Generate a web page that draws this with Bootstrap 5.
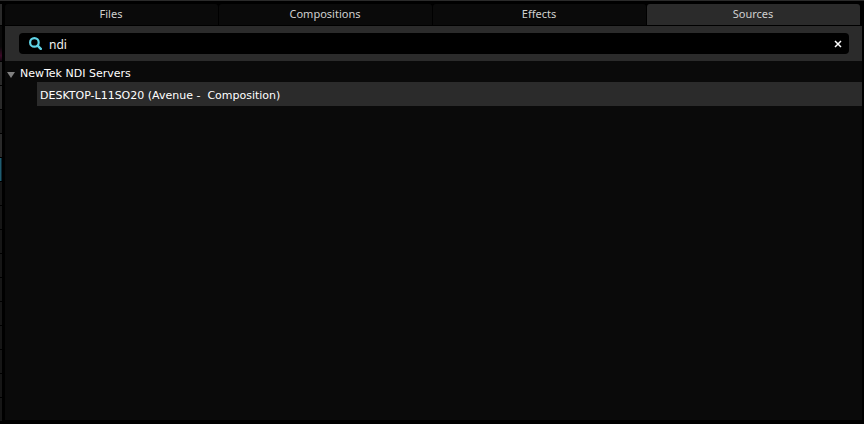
<!DOCTYPE html>
<html lang="en">
<head>
<meta charset="utf-8">
<meta name="viewport" content="width=device-width, initial-scale=1">
<title>Sources</title>
<link href="https://cdn.jsdelivr.net/npm/bootstrap@5.3.0/dist/css/bootstrap.min.css" rel="stylesheet">
<style>
body { background: #000; color: #fff; font: 11px/16px Verdana, "DejaVu Sans", sans-serif; }
.top-edge { height: 1px; background: #2b2b2b; margin-bottom: 3px; }
/* Sliver of the neighbouring panel */
.side-strip { width: 2px; margin-right: 3px; }
.side-strip span { flex: 0 0 23px; margin-bottom: 1px; background: #161616; }
.side-strip .cell-head { flex-basis: 21px; background: #2a2a2a; }
.side-strip .cell-clip { flex-basis: 35px; background: linear-gradient(#0a0a0a 60%, #3c0a28 85%, #120810); }
.side-strip .cell-light { background: #2a2a2a; }
.side-strip .cell-mid { background: #1d1d1d; }
.side-strip .cell-active { background: #0d2c38; border-left: 1px solid #1f5c70; }
.browser { margin-right: 2px; margin-bottom: 4px; }
.browser-tabs { gap: 1px; padding-right: 2px; margin-bottom: 1px; }
.browser-tabs .nav-link { height: 21px; padding: 2px 1px 3px 0; line-height: 16px; font-family: "Noto Sans", sans-serif; font-size: 11px; color: #d0d0d0; background: #0a0a0a; border-radius: 3px 3px 0 0; }
.browser-tabs .nav-link.active { background: #2b2b2b; color: #d0d0d0; }
.search-bar { background: #2b2b2b; padding: 7px 13px 7px 14px; }
.search-box { height: 21px; background: #000; border-radius: 4px; padding: 0 6px 0 10px; }
.search-box input { min-width: 0; color: #f0f0f0; font-family: "Noto Sans", sans-serif; font-size: 12px; line-height: 21px; height: 21px; outline: 0; margin-left: 7px; padding: 2px 0 0; }
.clear-btn { width: 10px; height: 21px; color: #fff; }
.source-list { background: #0a0a0a; }
.group-toggle { height: 21px; padding: 5px 0 0 2px; gap: 5px; color: #fff; line-height: 16px; }
.group-toggle svg { margin-top: 2px; }
.source-item { margin-left: 32px; height: 24px; padding: 6px 3px 2px; line-height: 16px; background: #2b2b2b; color: #fff; white-space: pre; }
</style>
<script defer src="https://cdn.jsdelivr.net/npm/bootstrap@5.3.0/dist/js/bootstrap.bundle.min.js"></script>
</head>
<body class="d-flex flex-column vh-100 overflow-hidden">
<div class="top-edge"></div>
<div class="d-flex flex-grow-1 overflow-hidden">
  <div class="side-strip d-flex flex-column overflow-hidden" aria-hidden="true">
    <span class="cell-head"></span><span class="cell-clip"></span><span class="cell-light"></span><span class="cell-light"></span><span class="cell-mid"></span><span class="cell-light"></span><span class="cell-active"></span><span></span><span></span><span></span><span></span><span></span><span></span><span></span><span></span><span></span><span></span>
  </div>
  <main class="browser d-flex flex-column flex-grow-1">
    <ul class="browser-tabs nav nav-fill flex-nowrap" role="tablist">
      <li class="nav-item w-25" role="presentation"><button class="nav-link w-100 border-0" type="button" role="tab" aria-selected="false">Files</button></li>
      <li class="nav-item w-25" role="presentation"><button class="nav-link w-100 border-0" type="button" role="tab" aria-selected="false">Compositions</button></li>
      <li class="nav-item w-25" role="presentation"><button class="nav-link w-100 border-0" type="button" role="tab" aria-selected="false">Effects</button></li>
      <li class="nav-item w-25" role="presentation"><button class="nav-link w-100 border-0 active" type="button" role="tab" aria-selected="true">Sources</button></li>
    </ul>
    <form class="search-bar">
      <div class="search-box d-flex align-items-center">
        <label for="source-search" class="d-flex" aria-label="Search sources">
          <svg width="13" height="13" viewBox="0 0 13 13" fill="none" stroke="#5fd3e6" aria-hidden="true"><circle cx="5.4" cy="5.4" r="4.3" stroke-width="2.2"/><path d="m8.6 8.6 3.2 3.2" stroke-width="2.5" stroke-linecap="round"/></svg>
        </label>
        <input id="source-search" class="flex-grow-1 border-0 bg-transparent" type="text" value="ndi" autocomplete="off">
        <button class="clear-btn btn p-0 border-0 d-flex align-items-center justify-content-center" type="button" aria-label="Clear search">
          <svg width="8" height="8" viewBox="0 0 8 8" fill="none" stroke="currentColor" stroke-width="1.5" aria-hidden="true"><path d="m1 1 6 6M7 1 1 7"/></svg>
        </button>
      </div>
    </form>
    <section class="source-list flex-grow-1">
      <button class="group-toggle w-100 d-flex align-items-center border-0 bg-transparent text-start" type="button" data-bs-toggle="collapse" data-bs-target="#ndi-sources" aria-expanded="true" aria-controls="ndi-sources">
        <svg width="8" height="6" viewBox="0 0 8 6" aria-hidden="true"><path d="M0 0h8L4 6z" fill="#808080"/></svg>
        <span>NewTek NDI Servers</span>
      </button>
      <ul id="ndi-sources" class="collapse show list-unstyled m-0">
        <li class="source-item">DESKTOP-L11SO20 (Avenue -  Composition)</li>
      </ul>
    </section>
  </main>
</div>
</body>
</html>
